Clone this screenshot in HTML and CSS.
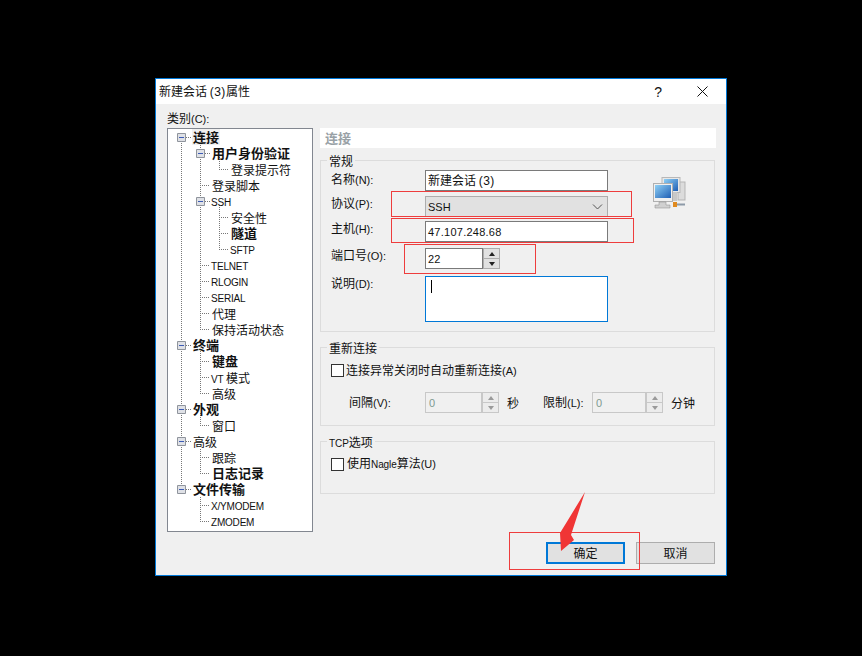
FILE: index.html
```html
<!DOCTYPE html>
<html lang="zh-CN">
<head>
<meta charset="utf-8">
<title>新建会话 (3)属性</title>
<link rel="stylesheet" href="styles.css">
</head>
<body>
<div class="dialog">
  <div class="titlebar">
    <span class="title">新建会话 <span class="lat t12">(3)</span>属性</span>
    <span class="help">?</span>
    <svg class="close" width="11" height="11" viewBox="0 0 11 11"><path d="M0.5 0.5L10.5 10.5M10.5 0.5L0.5 10.5" stroke="#111" fill="none"/></svg>
  </div>
  <div class="content">
    <div class="left">
      <div class="cat-label">类别<span class="lat">(C):</span></div>
      <div class="tree">
        <svg class="connectors" width="146" height="404" viewBox="0 0 146 404">
          <g class="dots">
            <path d="M14.5 13V357"/>
            <path d="M33.5 17V201M33.5 221V265M33.5 285V297M33.5 321V345M33.5 369V393"/>
            <path d="M52.5 29V41M52.5 77V121"/>
            <path d="M19 9.5H24M19 217.5H24M19 281.5H24M19 313.5H24M19 361.5H24"/>
            <path d="M38 25.5H43M33 57.5H43M38 73.5H43M33 137.5H43M33 153.5H43M33 169.5H43M33 185.5H43M33 201.5H43M33 233.5H43M33 249.5H43M33 265.5H43M33 297.5H43M33 329.5H43M33 345.5H43M33 377.5H43M33 393.5H43"/>
            <path d="M52 41.5H62M52 89.5H62M52 105.5H62M52 121.5H62"/>
          </g>
          <g class="boxes">
            <path d="M10.5 5.5h8v8h-8zM10.5 213.5h8v8h-8zM10.5 277.5h8v8h-8zM10.5 309.5h8v8h-8zM10.5 357.5h8v8h-8zM29.5 21.5h8v8h-8zM29.5 69.5h8v8h-8z"/>
          </g>
          <g class="minus">
            <path d="M12 9.5h5M12 217.5h5M12 281.5h5M12 313.5h5M12 361.5h5M31 25.5h5M31 73.5h5"/>
          </g>
        </svg>
        <div class="node l1 b sel"><span>连接</span></div>
        <div class="node l2 b"><span>用户身份验证</span></div>
        <div class="node l3"><span>登录提示符</span></div>
        <div class="node l2"><span>登录脚本</span></div>
        <div class="node l2 en"><span class="lat">SSH</span></div>
        <div class="node l3"><span>安全性</span></div>
        <div class="node l3 b"><span>隧道</span></div>
        <div class="node l3 en"><span class="lat">SFTP</span></div>
        <div class="node l2 en"><span class="lat">TELNET</span></div>
        <div class="node l2 en"><span class="lat">RLOGIN</span></div>
        <div class="node l2 en"><span class="lat">SERIAL</span></div>
        <div class="node l2"><span>代理</span></div>
        <div class="node l2"><span>保持活动状态</span></div>
        <div class="node l1 b"><span>终端</span></div>
        <div class="node l2 b"><span>键盘</span></div>
        <div class="node l2"><span><span class="lat">VT</span> 模式</span></div>
        <div class="node l2"><span>高级</span></div>
        <div class="node l1 b"><span>外观</span></div>
        <div class="node l2"><span>窗口</span></div>
        <div class="node l1"><span>高级</span></div>
        <div class="node l2"><span>跟踪</span></div>
        <div class="node l2 b"><span>日志记录</span></div>
        <div class="node l1 b"><span>文件传输</span></div>
        <div class="node l2 en"><span class="lat">X/YMODEM</span></div>
        <div class="node l2 en"><span class="lat">ZMODEM</span></div>
      </div>
    </div>
    <div class="right">
      <div class="page-head">连接</div>
      <section class="group g-general">
        <div class="legend">常规</div>
        <div class="general-body">
          <div class="fields">
            <div class="row r-name">
              <label class="lab lab-a">名称<span class="lat">(N):</span></label>
              <div class="input wide"><span>新建会话 <span class="lat t12">(3)</span></span></div>
            </div>
            <div class="row r-proto">
              <label class="lab lab-b">协议<span class="lat">(P):</span></label>
              <div class="select wide"><span class="lat">SSH</span>
                <svg width="11" height="6" viewBox="0 0 11 6"><path d="M1 0.5L5.5 5L10 0.5" fill="none" stroke="#555"/></svg>
              </div>
            </div>
            <div class="row r-host">
              <label class="lab lab-b">主机<span class="lat">(H):</span></label>
              <div class="input wide"><span class="lat num">47.107.248.68</span></div>
            </div>
            <div class="row r-port">
              <label class="lab lab-b">端口号<span class="lat">(O):</span></label>
              <div class="spinbox port">
                <div class="input grow"><span class="lat num">22</span></div>
                <div class="spin"><i class="up"></i><i class="down"></i></div>
              </div>
            </div>
            <div class="row r-desc">
              <label class="lab lab-b">说明<span class="lat">(D):</span></label>
              <div class="textarea wide"><b class="caret"></b></div>
            </div>
          </div>
          <svg class="net" width="34" height="34" viewBox="0 0 34 34">
            <defs>
              <linearGradient id="scr" x1="0" y1="0" x2="1" y2="1"><stop offset="0" stop-color="#8fd0f5"/><stop offset="1" stop-color="#1f5fb5"/></linearGradient>
            </defs>
            <rect x="25" y="5" width="7" height="18" fill="#dcdcdc" stroke="#b5b5b5"/>
            <rect x="9" y="0.5" width="18" height="15" fill="#e8e8e8" stroke="#b8b8b8"/>
            <rect x="11" y="2" width="14" height="12" fill="url(#scr)"/>
            <rect x="19" y="15" width="5" height="9" fill="#c8c8c8"/>
            <rect x="0.5" y="6.5" width="19" height="18" fill="#f0f0f0" stroke="#b0b0b0"/>
            <rect x="2" y="8" width="16" height="13" fill="url(#scr)"/>
            <path d="M6 25h7v3h4v3H2v-3h4z" fill="#d0d0d0" stroke="#8a8a8a" stroke-width="0.5"/>
            <path d="M20 27.5H32" stroke="#8d9aa8" stroke-width="2"/>
            <rect x="20" y="25" width="4" height="5" fill="#e08a20"/>
          </svg>
        </div>
      </section>
      <section class="group g-reconnect">
        <div class="legend">重新连接</div>
        <div class="check c-auto"><i class="box"></i><span>连接异常关闭时自动重新连接<span class="lat">(A)</span></span></div>
        <div class="interval">
          <label class="lab-int">间隔<span class="lat">(V):</span></label>
          <div class="spinbox off s-int">
            <div class="input grow"><span class="lat">0</span></div>
            <div class="spin"><i class="up"></i><i class="down"></i></div>
          </div>
          <span class="unit u-sec">秒</span>
          <label class="lab-lim">限制<span class="lat">(L):</span></label>
          <div class="spinbox off s-lim">
            <div class="input grow"><span class="lat">0</span></div>
            <div class="spin"><i class="up"></i><i class="down"></i></div>
          </div>
          <span class="unit u-min">分钟</span>
        </div>
      </section>
      <section class="group g-tcp">
        <div class="legend"><span class="lat nar">TCP</span>选项</div>
        <div class="check c-nagle"><i class="box"></i><span>使用<span class="lat nar">Nagle</span>算法<span class="lat">(U)</span></span></div>
      </section>
      <div class="buttons">
        <button class="btn primary">确定</button>
        <button class="btn">取消</button>
      </div>
    </div>
  </div>
</div>
<svg class="annotations" width="862" height="656" viewBox="0 0 862 656">
  <g fill="none" stroke="#ee3d3d">
    <rect x="391.5" y="191.5" width="240" height="25"/>
    <rect x="391.5" y="218.5" width="242" height="24"/>
    <rect x="404.5" y="244.5" width="131" height="29"/>
    <rect x="509.5" y="532.5" width="130" height="37"/>
  </g>
  <polygon points="585,492 568,520 560,533 561,551 574,540 571,535" fill="#f03535"/>
</svg>
</body>
</html>
```
FILE: styles.css
```css
* { box-sizing: border-box; }
html, body { margin: 0; height: 100%; }
body {
  background: #000;
  padding: 78px 0 0 155px;
  font: 12px/16px "Noto Sans CJK SC", "Liberation Sans", sans-serif;
  color: #111;
  overflow: hidden;
  position: relative;
}
.lat { font-family: "Liberation Sans", sans-serif; font-size: 11px; }
.t12 { font-size: 12px; letter-spacing: 0.5px; }
.nar { font-size: 10px; letter-spacing: -0.1px; }
.dialog {
  width: 572px;
  height: 498px;
  background: #f0f0f0;
  border: 1px solid #0078d7;
}
.titlebar {
  height: 25px;
  background: #fff;
  display: flex;
  align-items: center;
  padding-left: 3px;
}
.title { flex: 1; }
.help { font: 14px/16px "Liberation Sans", sans-serif; margin-right: 35px; }
.close { margin-right: 18px; }
.content { display: flex; padding-left: 11px; }
.left { width: 153px; }
.cat-label { margin-top: 6px; height: 16px; }
.tree {
  position: relative;
  width: 146px;
  height: 404px;
  margin-top: 2px;
  background: #fff;
  border: 1px solid #828790;
}
.connectors { position: absolute; left: -1px; top: -1px; }
.dots path { fill: none; stroke: #777; stroke-dasharray: 1 1; }
.boxes path { fill: #dfe1e6; stroke: #8f949c; }
.minus path { fill: none; stroke: #3c5bb5; }
.node { height: 16px; line-height: 18px; position: relative; white-space: nowrap; }
.node > span { padding: 0 1px; display: inline-block; }
.node.b, .node.en { line-height: 16px; }
.l1 { padding-left: 24px; }
.l2 { padding-left: 43px; }
.l3 { padding-left: 62px; }
.b { font-weight: 700; font-size: 13px; }
.sel > span { background: #f0f0f0; }
.node .lat { font-size: 10px; letter-spacing: -0.2px; margin-left: -1px; }
.right { width: 396px; margin-left: 0; padding-top: 24px; }
.page-head {
  height: 20px;
  background: #fff;
  color: #99a1a6;
  font-weight: 700;
  font-size: 13px;
  line-height: 20px;
  padding-left: 5px;
}
.group {
  width: 395px;
  border: 1px solid #dcdcdc;
  padding-left: 10px;
  margin-top: 15px;
}
.legend {
  width: fit-content;
  background: #f0f0f0;
  margin: -8px 0 0 -4px;
  padding: 0 2px;
  height: 16px;
}
.g-general { margin-top: 12px; height: 172px; }
.g-reconnect { height: 79px; }
.g-tcp { height: 53px; }
.general-body { display: flex; align-items: flex-start; margin-top: 1px; }
.fields { width: 277px; }
.net { margin: 7px 0 0 45px; }
.row { display: grid; grid-template-columns: 94px 183px; align-items: start; }
.r-name { height: 26px; }
.r-proto { height: 25px; }
.r-host { height: 27px; }
.r-port { height: 28px; }
.lab-a { margin-top: 1px; }
.lab-b { margin-top: -1px; }
.input {
  height: 21px;
  background: #fff;
  border: 1px solid #7a7a7a;
  padding-left: 2px;
  display: flex;
  align-items: center;
  white-space: nowrap;
}
.wide { width: 183px; }
.num { letter-spacing: 0.25px; font-size: 11px; }
.select {
  height: 21px;
  background: #e1e1e1;
  border: 1px solid #adadad;
  padding: 0 4px 0 2px;
  display: flex;
  align-items: center;
  justify-content: space-between;
}
.textarea {
  height: 46px;
  background: #fff;
  border: 1px solid #0078d7;
  padding: 3px 0 0 5px;
}
.caret { display: block; width: 1px; height: 13px; background: #000; }
.spinbox { display: flex; height: 21px; }
.port { width: 75px; }
.grow { flex: 1; }
.spin {
  width: 17px;
  display: flex;
  flex-direction: column;
  background: #e1e1e1;
  border: 1px solid #adadad;
  border-left: 1px solid #adadad;
}
.spin i {
  flex: 1;
  display: flex;
  align-items: center;
  justify-content: center;
}
.spin .up { border-bottom: 1px solid #adadad; }
.spin i::after {
  content: "";
  border-left: 3px solid transparent;
  border-right: 3px solid transparent;
}
.spin .up::after { border-bottom: 4px solid #222; }
.spin .down::after { border-top: 4px solid #222; }
.off .input { background: #f0f0f0; border-color: #c8c8c8; color: #7f9a90; padding-left: 3px; }
.off .spin { border-color: #c8c8c8; }
.off .spin .up { border-color: #c8c8c8; }
.off .spin i { background: #ececec; }
.off .up::after { border-bottom-color: #9a9a9a; }
.off .down::after { border-top-color: #9a9a9a; }
.s-int { width: 74px; }
.s-lim { width: 71px; }
.check { display: flex; align-items: center; }
.box { width: 13px; height: 13px; background: #fff; border: 1px solid #333; margin-right: 3px; flex: none; }
.c-auto { margin-top: 6px; }
.c-auto .box { margin-right: 2px; }
.c-nagle { margin-top: 5px; }
.interval { display: flex; align-items: center; margin-top: 13px; height: 21px; }
.lab-int { width: 76px; margin-left: 18px; }
.unit { white-space: nowrap; }
.u-sec { margin: 0 24px 0 8px; }
.lab-lim { width: 49px; }
.u-min { margin-left: 8px; }
.buttons { display: flex; justify-content: flex-end; gap: 11px; padding-right: 1px; margin-top: 48px; }
.btn {
  width: 79px;
  height: 22px;
  font: inherit;
  color: #111;
  padding: 0;
  background: #e1e1e1;
  border: 1px solid #adadad;
}
.primary { border: 2px solid #0078d7; }
.annotations { position: absolute; left: 0; top: 0; pointer-events: none; }
```
